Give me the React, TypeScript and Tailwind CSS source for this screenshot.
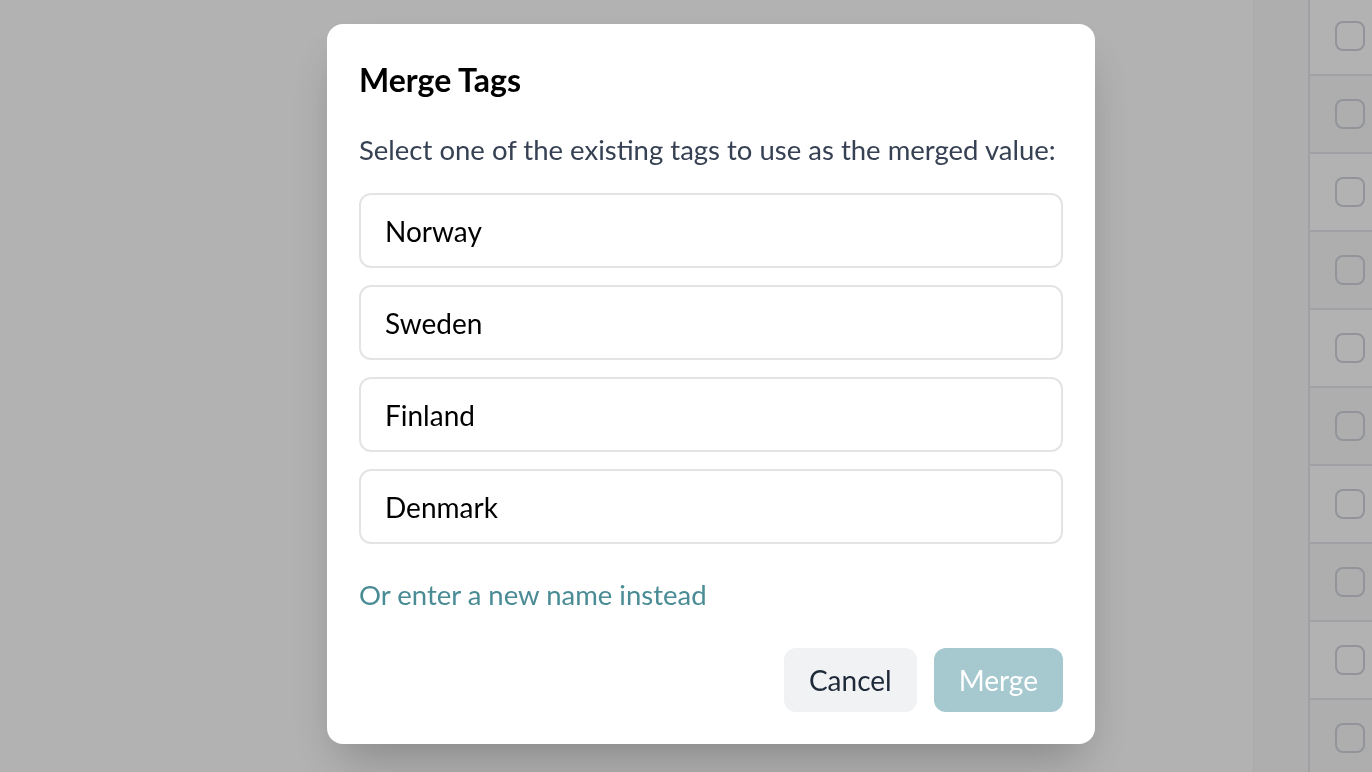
const tags = ["Norway", "Sweden", "Finland", "Denmark"]

const rows = Array.from({ length: 10 }, (_, i) => i)

const BackgroundPage = () => {
    return <div className="flex h-[772px] w-full bg-white overflow-hidden">
        <div className="flex-1" />
        <div className="w-[55px] bg-gray-50 border-l border-gray-100" />
        <div className="w-[64px] flex flex-col border-l-2 border-gray-200 -mt-[2px]">
            {rows.map((i) => (
                <div
                    key={i}
                    className={
                        "h-[78px] shrink-0 flex items-center pl-[25px] border-b-2 border-gray-200 " +
                        (i % 2 === 1 ? "bg-gray-50" : "bg-white")
                    }
                >
                    <div className="w-[30px] h-[30px] rounded-lg border-2 border-gray-300" />
                </div>
            ))}
        </div>
    </div>
}

const MergeTagsDialog = () => {
    return <div className="w-[768px] h-[720px] bg-white rounded-2xl shadow-2xl p-8 flex flex-col">
        <h2 className="text-[32px] leading-[40px] font-bold text-black mt-[4px]">
            Merge Tags
        </h2>
        <p className="mt-[32px] text-[27.5px] leading-[36px] text-gray-700">
            Select one of the existing tags to use as the merged value:
        </p>
        <div className="mt-[25px] flex flex-col gap-[17px]">
            {tags.map((tag) => (
                <button
                    key={tag}
                    className="h-[75px] w-full text-left px-[24px] rounded-xl border-2 border-[#e4e4e7] text-[28px] text-black"
                >
                    {tag}
                </button>
            ))}
        </div>
        <a className="mt-[33px] text-[27.5px] leading-[36px] text-[#4a8c95] cursor-pointer">
            Or enter a new name instead
        </a>
        <div className="mt-auto flex justify-end gap-[17px]">
            <button className="h-[64px] px-[25px] rounded-xl bg-[#f1f2f4] text-[28px] text-gray-800">
                Cancel
            </button>
            <button className="h-[64px] px-[25px] rounded-xl bg-[#a6c8cf] text-[28px] text-white">
                Merge
            </button>
        </div>
    </div>
}

export default function App() {
    return <div className="relative h-[772px] w-full overflow-hidden font-['Lato',_'Noto_Sans',_sans-serif]">
        <BackgroundPage />
        <div className="fixed inset-0 bg-black/30 flex items-start pl-[327px] pt-[24px]">
            <MergeTagsDialog />
        </div>
    </div>
}
